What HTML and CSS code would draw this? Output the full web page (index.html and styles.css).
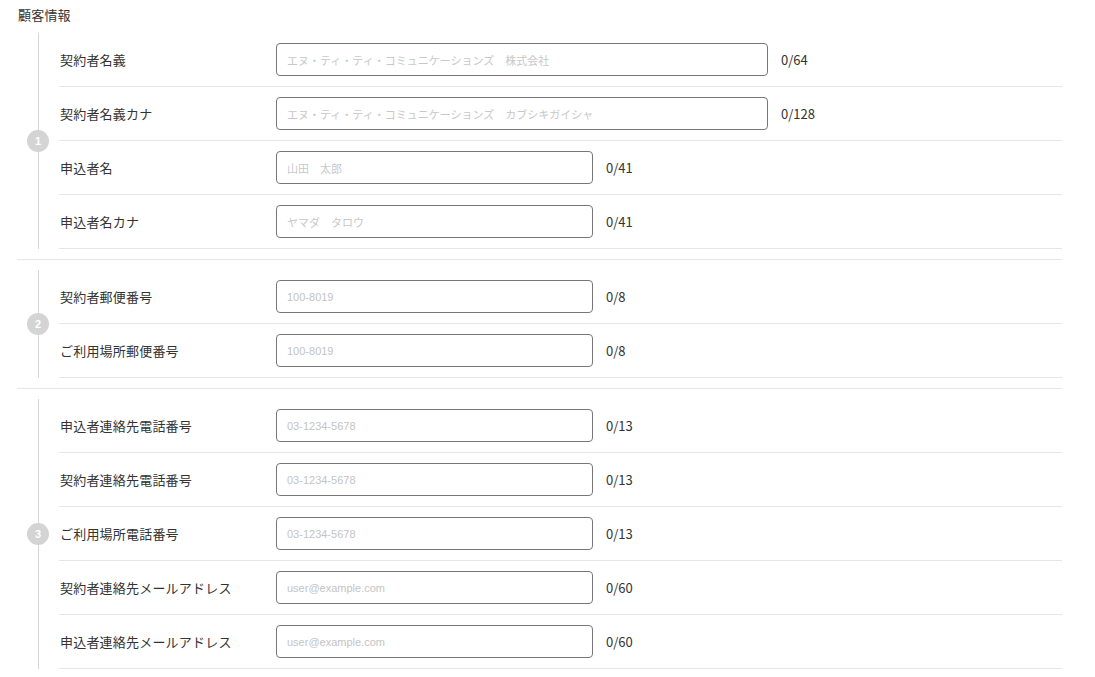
FILE: index.html
```html
<!DOCTYPE html>
<html lang="ja">
<head>
<meta charset="utf-8">
<link rel="stylesheet" href="styles.css">
</head>
<body>
<div class="page">
  <div class="title">顧客情報</div>

  <div class="section">
    <div class="rail"><span class="step">1</span></div>
    <div class="rows">
      <div class="row"><div class="label">契約者名義</div><input class="field wide" placeholder="エヌ・ティ・ティ・コミュニケーションズ　株式会社"><span class="count">0/64</span></div>
      <div class="row"><div class="label">契約者名義カナ</div><input class="field wide" placeholder="エヌ・ティ・ティ・コミュニケーションズ　カブシキガイシャ"><span class="count">0/128</span></div>
      <div class="row"><div class="label">申込者名</div><input class="field" placeholder="山田　太郎"><span class="count">0/41</span></div>
      <div class="row"><div class="label">申込者名カナ</div><input class="field" placeholder="ヤマダ　タロウ"><span class="count">0/41</span></div>
    </div>
  </div>
  <div class="divider"></div>

  <div class="section">
    <div class="rail"><span class="step">2</span></div>
    <div class="rows">
      <div class="row"><div class="label">契約者郵便番号</div><input class="field latin" placeholder="100-8019"><span class="count">0/8</span></div>
      <div class="row"><div class="label">ご利用場所郵便番号</div><input class="field latin" placeholder="100-8019"><span class="count">0/8</span></div>
    </div>
  </div>
  <div class="divider"></div>

  <div class="section">
    <div class="rail"><span class="step">3</span></div>
    <div class="rows">
      <div class="row"><div class="label">申込者連絡先電話番号</div><input class="field latin" placeholder="03-1234-5678"><span class="count">0/13</span></div>
      <div class="row"><div class="label">契約者連絡先電話番号</div><input class="field latin" placeholder="03-1234-5678"><span class="count">0/13</span></div>
      <div class="row"><div class="label">ご利用場所電話番号</div><input class="field latin" placeholder="03-1234-5678"><span class="count">0/13</span></div>
      <div class="row"><div class="label">契約者連絡先メールアドレス</div><input class="field latin" placeholder="user@example.com"><span class="count">0/60</span></div>
      <div class="row"><div class="label">申込者連絡先メールアドレス</div><input class="field latin" placeholder="user@example.com"><span class="count">0/60</span></div>
    </div>
  </div>
</div>
</body>
</html>
```
FILE: styles.css
```css
html, body {
  margin: 0;
  padding: 0;
  background: #fff;
}
body {
  font-family: "Noto Sans CJK JP", "Noto Sans", sans-serif;
  color: #333;
  font-size: 13px;
}
.page {
  width: 1045px;
  padding: 0 0 0 17px;
}
.title {
  padding: 5px 0 8px 1px;
  line-height: 20px;
  height: 20px;
  font-size: 13px;
  letter-spacing: 0.2px;
  color: #333;
}
.section {
  display: flex;
}
.rail {
  width: 42px;
  flex: none;
  display: flex;
  align-items: center;
  justify-content: center;
  background: linear-gradient(#d6d6d6, #d6d6d6) no-repeat 21px 0 / 1px 100%;
}
.step {
  width: 22px;
  height: 22px;
  border-radius: 50%;
  background: #d4d4d4;
  color: #fff;
  font-family: "Liberation Sans", sans-serif;
  font-weight: bold;
  font-size: 11px;
  line-height: 22px;
  text-align: center;
}
.rows {
  flex: 1;
  display: flex;
  flex-direction: column;
}
.row {
  display: flex;
  align-items: center;
  padding: 10px 0;
  border-bottom: 1px solid #e6e6e6;
}
.label {
  width: 216px;
  padding-left: 1px;
  flex: none;
  font-size: 13px;
  letter-spacing: 0.2px;
  color: #333;
}
.field {
  box-sizing: border-box;
  width: 317px;
  height: 33px;
  border: 1px solid #777;
  border-radius: 4px;
  padding: 0 10px;
  margin: 0;
  font-family: "Noto Sans CJK JP", sans-serif;
  font-size: 11px;
  color: #333;
  background: #fff;
  outline: none;
}
.field.latin {
  font-family: "Liberation Sans", sans-serif;
}
.field.wide {
  width: 492px;
}
.field::placeholder {
  color: #c8c8c8;
}
.field.latin::placeholder {
  color: #c4c4c4;
}
.count {
  margin-left: 13px;
  font-size: 13px;
  color: #333;
}
.divider {
  height: 1px;
  background: #e6e6e6;
  margin: 10px 0;
}
```
